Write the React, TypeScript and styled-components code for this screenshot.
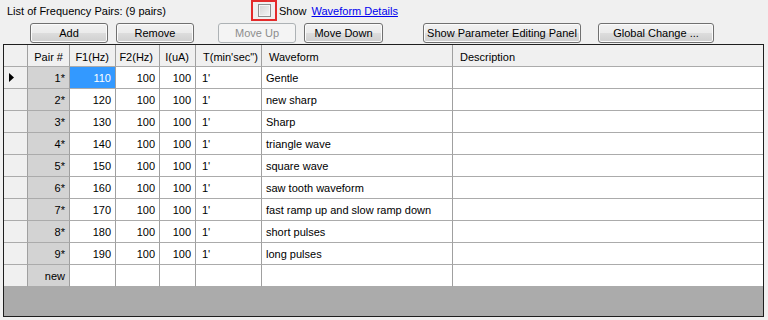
import React from 'react';
import styled, { createGlobalStyle, css } from 'styled-components';

// Row data for the frequency pairs grid
type PairRow = {
  pair: string;
  f1: string;
  f2: string;
  current: string;
  time: string;
  waveform: string;
  description: string;
};

const rows: PairRow[] = [
  { pair: '1*', f1: '110', f2: '100', current: '100', time: "1'", waveform: 'Gentle', description: '' },
  { pair: '2*', f1: '120', f2: '100', current: '100', time: "1'", waveform: 'new sharp', description: '' },
  { pair: '3*', f1: '130', f2: '100', current: '100', time: "1'", waveform: 'Sharp', description: '' },
  { pair: '4*', f1: '140', f2: '100', current: '100', time: "1'", waveform: 'triangle wave', description: '' },
  { pair: '5*', f1: '150', f2: '100', current: '100', time: "1'", waveform: 'square wave', description: '' },
  { pair: '6*', f1: '160', f2: '100', current: '100', time: "1'", waveform: 'saw tooth waveform', description: '' },
  { pair: '7*', f1: '170', f2: '100', current: '100', time: "1'", waveform: 'fast ramp up and slow ramp down', description: '' },
  { pair: '8*', f1: '180', f2: '100', current: '100', time: "1'", waveform: 'short pulses', description: '' },
  { pair: '9*', f1: '190', f2: '100', current: '100', time: "1'", waveform: 'long pulses', description: '' },
  { pair: 'new', f1: '', f2: '', current: '', time: '', waveform: '', description: '' },
];

const buttons = [
  { label: 'Add', width: 78, ml: 0 },
  { label: 'Remove', width: 78, ml: 8 },
  { label: 'Move Up', width: 78, ml: 24, disabled: true },
  { label: 'Move Down', width: 79, ml: 8 },
  { label: 'Show Parameter Editing Panel', width: 158, ml: 40 },
  { label: 'Global Change ...', width: 116, ml: 17 },
];

const GlobalStyle = createGlobalStyle`
  html, body {
    margin: 0;
    padding: 0;
    background: #f0f0f0;
    font-family: "Liberation Sans", Arial, sans-serif;
    font-size: 11px;
    color: #000;
  }
`;

const Page = styled.div`
  width: 768px;
  height: 320px;
  overflow: hidden;
  background: #f0f0f0;
`;

const TopBar = styled.div`
  height: 22px;
  display: flex;
  align-items: center;
  padding-left: 7px;
`;

const Caption = styled.span`
  width: 244px;
  margin-top: -1px;
`;

// red outline drawn round the checkbox in the screenshot
const Highlight = styled.div`
  box-sizing: border-box;
  width: 26px;
  height: 21px;
  margin-top: -1px;
  border: 2px solid #e42b2b;
  display: flex;
  align-items: center;
  justify-content: center;
`;

const CheckBox = styled.div`
  box-sizing: border-box;
  width: 13px;
  height: 13px;
  border: 1px solid #8f8f8f;
  background: linear-gradient(135deg, #d4d4d4 0%, #f4f4f4 100%);
  box-shadow: inset 0 0 0 1px #f4f4f4;
`;

const ShowLabel = styled.span`
  margin-left: 2px;
`;

const DetailsLink = styled.a`
  margin-left: 5px;
  color: #0000ee;
  text-decoration: underline;
  cursor: pointer;
`;

const Toolbar = styled.div`
  height: 22px;
  display: flex;
  align-items: flex-start;
  padding: 1px 0 0 30px;
  box-sizing: border-box;
`;

const Button = styled.button<{ $w: number; $ml: number }>`
  box-sizing: border-box;
  width: ${({ $w }) => $w}px;
  margin-left: ${({ $ml }) => $ml}px;
  height: 20px;
  padding: 0;
  border: 1px solid #707070;
  border-radius: 3px;
  background: linear-gradient(#f2f2f2 0%, #ebebeb 50%, #dddddd 51%, #cfcfcf 100%);
  box-shadow: inset 0 0 0 1px #fbfbfb;
  font-family: "Liberation Sans", Arial, sans-serif;
  font-size: 11px;
  color: #000;

  &:disabled {
    border-color: #adb2b5;
    background: #f4f4f4;
    box-shadow: none;
    color: #8d8d8d;
  }
`;

const Grid = styled.div`
  box-sizing: border-box;
  margin-left: 3px;
  width: 761px;
  height: 273px;
  border: 1px solid #1e1e1e;
  background: #fff;
  display: flex;
  flex-direction: column;
`;

const Row = styled.div`
  display: grid;
  grid-template-columns: 24px 42px 46px 44px 36px 66px 191px 1fr;
  height: 22px;
`;

type CellKind = 'head' | 'rowhead' | 'readonly' | 'selected' | 'plain';

const Cell = styled.div<{ $kind?: CellKind; $right?: boolean }>`
  box-sizing: border-box;
  display: flex;
  align-items: center;
  justify-content: ${({ $right }) => ($right ? 'flex-end' : 'flex-start')};
  padding: 0 4px;
  border-right: 1px solid #a0a0a0;
  border-bottom: 1px solid #ababab;
  white-space: nowrap;
  overflow: hidden;
  background: #fff;

  &:last-child {
    border-right: none;
  }

  ${({ $kind }) =>
    $kind === 'head' &&
    css`
      background: #f0f0f0;
      padding: 3px 6px 0 7px;
    `}
  ${({ $kind }) =>
    $kind === 'rowhead' &&
    css`
      background: #f0f0f0;
      padding-left: 5px;
    `}
  ${({ $kind }) =>
    $kind === 'readonly' &&
    css`
      background: #d3d3d3;
    `}
  ${({ $kind }) =>
    $kind === 'selected' &&
    css`
      background: #3399ff;
      color: #fff;
    `}
`;

const TimeText = styled.span`
  padding-left: 2px;
`;

const Workspace = styled.div`
  flex: 1;
  background: #ababab;
`;

const CurrentRowArrow = () => (
  <svg width="5" height="9" viewBox="0 0 5 9">
    <path d="M0 0 L5 4.5 L0 9 Z" fill="#000" />
  </svg>
);

const App: React.FC = () => {
  return (
    <Page>
      <GlobalStyle />
      <TopBar>
        <Caption>List of Frequency Pairs: (9 pairs)</Caption>
        <Highlight>
          <CheckBox />
        </Highlight>
        <ShowLabel>Show</ShowLabel>
        <DetailsLink>Waveform Details</DetailsLink>
      </TopBar>
      <Toolbar>
        {buttons.map((b) => (
          <Button key={b.label} $w={b.width} $ml={b.ml} disabled={b.disabled}>
            {b.label}
          </Button>
        ))}
      </Toolbar>
      <Grid>
        <Row>
          <Cell $kind="head" />
          <Cell $kind="head" $right>Pair #</Cell>
          <Cell $kind="head" $right>F1(Hz)</Cell>
          <Cell $kind="head" $right>F2(Hz)</Cell>
          <Cell $kind="head" $right>I(uA)</Cell>
          <Cell $kind="head">T(min'sec")</Cell>
          <Cell $kind="head">Waveform</Cell>
          <Cell $kind="head">Description</Cell>
        </Row>
        {rows.map((r, i) => (
          <Row key={r.pair}>
            <Cell $kind="rowhead">{i === 0 && <CurrentRowArrow />}</Cell>
            <Cell $kind="readonly" $right>{r.pair}</Cell>
            <Cell $kind={i === 0 ? 'selected' : 'plain'} $right>{r.f1}</Cell>
            <Cell $right>{r.f2}</Cell>
            <Cell $right>{r.current}</Cell>
            <Cell>
              <TimeText>{r.time}</TimeText>
            </Cell>
            <Cell>{r.waveform}</Cell>
            <Cell>{r.description}</Cell>
          </Row>
        ))}
        <Workspace />
      </Grid>
    </Page>
  );
};

export default App;
